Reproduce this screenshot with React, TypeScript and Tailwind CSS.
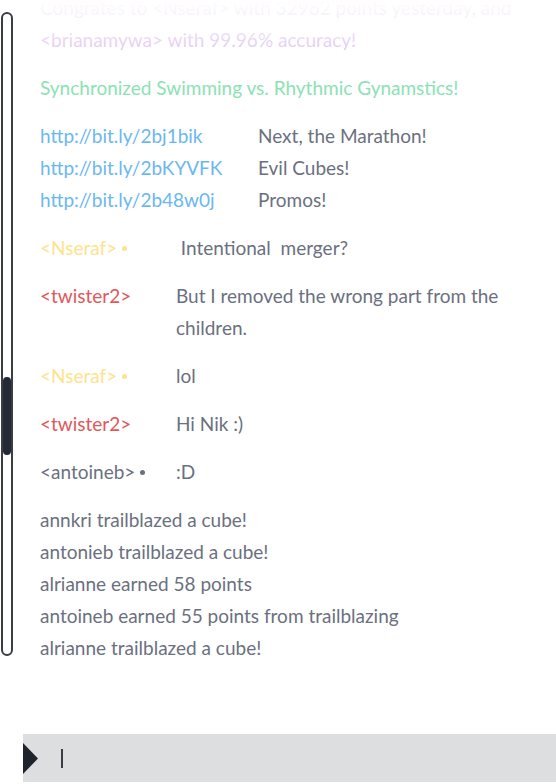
import React from "react";

type ChatLine = {
  name: string;
  nameColor: string;
  dot?: boolean;
  text: string;
};

const links = [
  { url: "http://bit.ly/2bj1bik", label: "Next, the Marathon!" },
  { url: "http://bit.ly/2bKYVFK", label: "Evil Cubes!" },
  { url: "http://bit.ly/2b48w0j", label: "Promos!" },
];

const chat: ChatLine[] = [
  { name: "<Nseraf>", nameColor: "text-[#fde38c]", dot: true, text: "\u00a0Intentional\u00a0\u00a0merger?" },
  { name: "<twister2>", nameColor: "text-[#e2575b]", text: "But I removed the wrong part from the children." },
  { name: "<Nseraf>", nameColor: "text-[#fde38c]", dot: true, text: "lol" },
  { name: "<twister2>", nameColor: "text-[#e2575b]", text: "Hi Nik :)" },
  { name: "<antoineb>", nameColor: "text-[#6b7080]", dot: true, text: ":D" },
];

const events = [
  "annkri trailblazed a cube!",
  "antonieb trailblazed a cube!",
  "alrianne earned 58 points",
  "antoineb earned 55 points from trailblazing",
  "alrianne trailblazed a cube!",
];

export default function App() {
  return (
    <div className="flex h-[784px] w-[556px] flex-col overflow-hidden bg-white font-['Lato','Noto_Sans',sans-serif] text-[19px] leading-8 text-[#6b7080]">
      <div className="flex h-[700px] shrink-0">
        {/* scroll track */}
        <div className="ml-[1px] mt-[12px] flex h-[644px] w-[12px] shrink-0 flex-col rounded-full border-2 border-[#3a3d44] pt-[363px]">
          <div className="mx-auto h-[78px] w-[8px] rounded-full bg-[#232a35]" />
        </div>

        <div className="relative min-w-0 flex-1 overflow-hidden pl-[27px] pr-4">
          <div className="-mt-2 flex flex-col gap-4">
            <div className="pr-6 text-[#d9b6ef]">
              Congrates to &lt;Nseraf&gt; with 32962 points yesterday, and &lt;brianamywa&gt; with 99.96% accuracy!
            </div>

            <div className="text-[#8be2b4]">Synchronized Swimming vs. Rhythmic Gynamstics!</div>

            <div>
              {links.map((l) => (
                <div key={l.url} className="flex">
                  <span className="w-[218px] shrink-0 text-[#6bb8f0]">{l.url}</span>
                  <span>{l.label}</span>
                </div>
              ))}
            </div>

            {chat.map((c, i) => (
              <div key={i} className="flex items-start">
                <span className={`flex h-8 w-[136px] shrink-0 items-center ${c.nameColor}`}>
                  <span>{c.name}</span>
                  {c.dot ? <span className="ml-[5px] inline-block h-[5px] w-[5px] rounded-full bg-current" /> : null}
                </span>
                <span className="max-w-[336px]">{c.text}</span>
              </div>
            ))}

            <div>
              {events.map((e) => (
                <div key={e}>{e}</div>
              ))}
            </div>
          </div>

          <div className="pointer-events-none absolute inset-x-0 top-0 h-[64px] bg-gradient-to-b from-white via-white/60 to-white/0" />
        </div>
      </div>

      <div className="mb-[2px] ml-[23px] mt-auto flex h-[48px] items-center bg-[#dddee0]">
        <svg width="15" height="31" viewBox="0 0 15 31" className="shrink-0">
          <polygon points="0,0 15,15.5 0,31" fill="#1f232b" />
        </svg>
        <span className="ml-[23px] h-[19px] w-[2px] bg-[#3a3d44]" />
      </div>
    </div>
  );
}
